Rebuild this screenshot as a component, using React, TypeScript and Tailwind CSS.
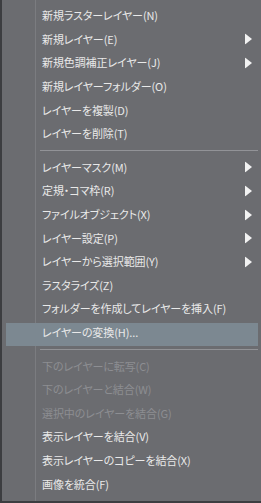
import React from 'react';

type Item = { label: string; sub?: boolean; disabled?: boolean; active?: boolean } | 'sep';

const items: Item[] = [
  { label: '新規ラスターレイヤー(N)' },
  { label: '新規レイヤー(E)', sub: true },
  { label: '新規色調補正レイヤー(J)', sub: true },
  { label: '新規レイヤーフォルダー(O)' },
  { label: 'レイヤーを複製(D)' },
  { label: 'レイヤーを削除(T)' },
  'sep',
  { label: 'レイヤーマスク(M)', sub: true },
  { label: '定規・コマ枠(R)', sub: true },
  { label: 'ファイルオブジェクト(X)', sub: true },
  { label: 'レイヤー設定(P)', sub: true },
  { label: 'レイヤーから選択範囲(Y)', sub: true },
  { label: 'ラスタライズ(Z)' },
  { label: 'フォルダーを作成してレイヤーを挿入(F)' },
  { label: 'レイヤーの変換(H)...', active: true },
  'sep',
  { label: '下のレイヤーに転写(C)', disabled: true },
  { label: '下のレイヤーと結合(W)', disabled: true },
  { label: '選択中のレイヤーを結合(G)', disabled: true },
  { label: '表示レイヤーを結合(V)' },
  { label: '表示レイヤーのコピーを結合(X)' },
  { label: '画像を統合(F)' },
];

const Arrow = () => (
  <svg width="7" height="11" viewBox="0 0 7 11" className="absolute right-[9px] top-1/2 -translate-y-1/2">
    <polygon points="0,0 7,5.5 0,11" fill="#f2f2f2" />
  </svg>
);

export default function App() {
  return (
    <div className="w-[261px] h-[503px] bg-[#6b6c70] border-l-2 border-b-2 border-[#3c3d40] relative overflow-hidden">
      {/* icon gutter line */}
      <div className="absolute left-[33px] top-0 bottom-0 w-px bg-[#7b7c80]" />
      <div
        className="relative pt-[4px] text-[11px] tracking-[-0.1px] [font-feature-settings:'palt']"
        style={{ fontFamily: '"Noto Sans CJK JP", "Noto Sans", sans-serif' }}
      >
        {items.map((it, i) =>
          it === 'sep' ? (
            <div key={i} className="h-[10px] flex items-center pl-[38px] pr-[3px]">
              <div className="h-px w-full bg-[#929397]" />
            </div>
          ) : (
            <div key={i} className="h-[23.6px] relative flex items-center">
              {it.active && <div className="absolute left-[4px] right-[3px] top-[2px] bottom-[-2px] bg-[#7c8891]" />}
              <span
                className={`relative pl-[40px] whitespace-nowrap leading-none ${
                  it.disabled ? 'text-[#8d8e92]' : 'text-[#e9e9e9]'
                }`}
              >
                {it.label}
              </span>
              {it.sub && <Arrow />}
            </div>
          )
        )}
      </div>
    </div>
  );
}
